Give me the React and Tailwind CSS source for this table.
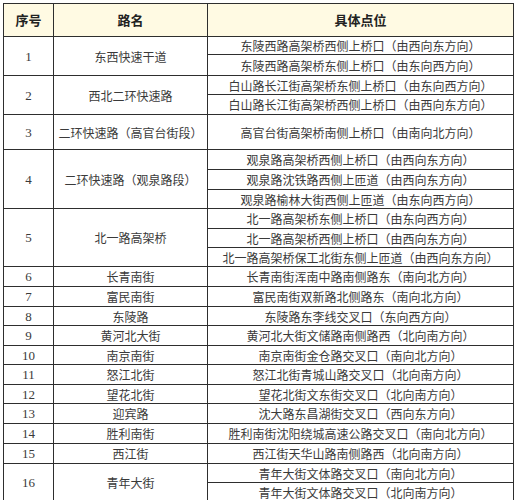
import React from 'react';

// 沈阳快速路上桥口点位表
const roads = [
  { no: 1, name: '东西快速干道', spots: ['东陵西路高架桥西侧上桥口（由西向东方向）', '东陵西路高架桥东侧上桥口（由东向西方向）'] },
  { no: 2, name: '西北二环快速路', spots: ['白山路长江街高架桥东侧上桥口（由东向西方向）', '白山路长江街高架桥西侧上桥口（由西向东方向）'] },
  { no: 3, name: '二环快速路（高官台街段）', spots: ['高官台街高架桥南侧上桥口（由南向北方向）'] },
  { no: 4, name: '二环快速路（观泉路段）', spots: ['观泉路高架桥西侧上桥口（由西向东方向）', '观泉路沈铁路西侧上匝道（由西向东方向）', '观泉路榆林大街西侧上匝道（由东向西方向）'] },
  { no: 5, name: '北一路高架桥', spots: ['北一路高架桥东侧上桥口（由东向西方向）', '北一路高架桥西侧上桥口（由西向东方向）', '北一路高架桥保工北街东侧上匝道（由西向东方向）'] },
  { no: 6, name: '长青南街', spots: ['长青南街浑南中路南侧路东（南向北方向）'] },
  { no: 7, name: '富民南街', spots: ['富民南街双新路北侧路东（南向北方向）'] },
  { no: 8, name: '东陵路', spots: ['东陵路东李线交叉口（东向西方向）'] },
  { no: 9, name: '黄河北大街', spots: ['黄河北大街文储路南侧路西（北向南方向）'] },
  { no: 10, name: '南京南街', spots: ['南京南街金仓路交叉口（南向北方向）'] },
  { no: 11, name: '怒江北街', spots: ['怒江北街青城山路交叉口（北向南方向）'] },
  { no: 12, name: '望花北街', spots: ['望花北街文东街交叉口（北向南方向）'] },
  { no: 13, name: '迎宾路', spots: ['沈大路东昌湖街交叉口（西向东方向）'] },
  { no: 14, name: '胜利南街', spots: ['胜利南街沈阳绕城高速公路交叉口（南向北方向）'] },
  { no: 15, name: '西江街', spots: ['西江街天华山路南侧路西（北向南方向）'] },
  { no: 16, name: '青年大街', spots: ['青年大街文体路交叉口（南向北方向）', '青年大街文体路交叉口（北向南方向）'] },
];

const spanClass = { 1: 'row-span-1', 2: 'row-span-2', 3: 'row-span-3' };

const App = () => {
  return (
    <div className="w-[516px] h-[500px] overflow-hidden bg-white pl-[3px] pt-[3px] text-[#3a3a3a]" style={{ fontFamily: '"Noto Sans CJK SC", "Liberation Sans", sans-serif' }}>
      <div className="grid w-[511px] grid-cols-[49px_153px_305px] grid-rows-[32px_17px_20px_18px_19px_34px_19px_19px_18px_19px_18px_18px_19px_19px_18px_19px_18px_19px_18px_19px_19px_19px_18px_18px_18px] gap-px border border-[#2e2e2e] bg-[#2e2e2e]">
        <div className="flex items-center justify-center bg-[#fffae3] text-[13px] font-bold text-[#222]">序号</div>
        <div className="flex items-center justify-center bg-[#fffae3] text-[13px] font-bold text-[#222]">路名</div>
        <div className="flex items-center justify-center bg-[#fffae3] text-[13px] font-bold text-[#222]">具体点位</div>
        {roads.map((r) => (
          <React.Fragment key={r.no}>
            <div className={`${spanClass[r.spots.length]} flex items-center justify-center bg-white text-[13px] pt-px`} style={{ fontFamily: '"Liberation Serif", serif' }}>{r.no}</div>
            <div className={`${spanClass[r.spots.length]} flex items-center justify-center bg-white text-[12px] leading-none pt-px`}>{r.name}</div>
            {r.spots.map((s) => (
              <div key={s} className="flex items-center justify-center bg-white text-[12px] leading-none whitespace-nowrap pt-px">{s}</div>
            ))}
          </React.Fragment>
        ))}
      </div>
    </div>
  );
};

export default App;
